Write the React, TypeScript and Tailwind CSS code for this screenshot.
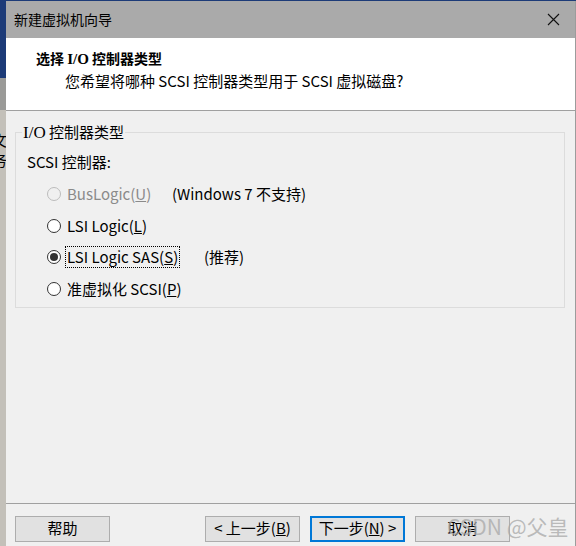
import type { ReactNode } from 'react';

const ui = { fontFamily: '"Noto Sans CJK SC", "Noto Sans", sans-serif' };
const serif = { fontFamily: '"Liberation Serif", "Noto Sans CJK SC", serif' };

function Radio({ checked, disabled }: { checked?: boolean; disabled?: boolean }) {
  return (
    <span
      className={`w-[14px] h-[14px] rounded-full border flex items-center justify-center shrink-0 ${
        disabled ? 'border-[#bcbcbc] bg-[#f0f0f0]' : 'border-[#333] bg-white'
      }`}
    >
      {checked && <span className="w-[8px] h-[8px] rounded-full bg-[#333]" />}
    </span>
  );
}

function Option({
  label,
  hint,
  hintX,
  checked,
  disabled,
  focused,
}: {
  label: ReactNode;
  hint?: string;
  hintX?: string;
  checked?: boolean;
  disabled?: boolean;
  focused?: boolean;
}) {
  return (
    <div className="h-[31.7px] flex items-center pl-[31px]">
      <Radio checked={checked} disabled={disabled} />
      <span
        className={`ml-[5px] px-[1px] leading-[20px] ${disabled ? 'text-[#8a8a8a]' : 'text-black'} ${
          focused ? 'outline outline-1 outline-dotted outline-black' : 'outline-none'
        }`}
      >
        {label}
      </span>
      {hint && <span className={`absolute ${hintX} text-black`}>{hint}</span>}
    </div>
  );
}

function Button({ children, primary }: { children: ReactNode; primary?: boolean }) {
  return (
    <div
      className={`w-[95px] h-[26px] flex items-center justify-center bg-[#e1e1e1] text-[15px] text-black ${
        primary ? 'border-2 border-[#0078d7]' : 'border border-[#adadad]'
      }`}
    >
      {children}
    </div>
  );
}

export default function App() {
  return (
    <div className="w-[576px] h-[546px] overflow-hidden relative bg-[#f0f0f0] text-[15px]" style={ui}>
      <div className="h-[1px] bg-[#1d3b78]" />
      <div className="flex h-[545px]">
        {/* desktop behind the dialog */}
        <div className="w-[6px] flex flex-col shrink-0">
          <div className="h-[77px] bg-[#1d3b78]" />
          <div className="h-[32px] bg-[#9a9a98]" />
          <div className="flex-1 bg-[#c3c0b9] flex flex-col items-start overflow-hidden">
            <span className="mt-[20px] -ml-[8px] text-[15px] leading-[20px] text-black">文</span>
            <span className="-ml-[8px] text-[15px] leading-[20px] text-black">务</span>
          </div>
        </div>

        <div className="flex-1 flex flex-col">
          {/* title bar */}
          <div className="h-[37px] bg-[#aaaaaa] flex items-center justify-between pl-[8px] pr-[15px]">
            <span className="text-[14px] text-black">新建虚拟机向导</span>
            <svg width="13" height="13" viewBox="0 0 13 13">
              <path d="M1 1 L12 12 M12 1 L1 12" stroke="#111" strokeWidth="1.1" />
            </svg>
          </div>

          {/* header */}
          <div className="h-[72px] bg-white flex flex-col">
            <div className="pl-[30px] pt-[10px] leading-[20px] text-[14px] font-bold text-black">
              选择 <span style={serif} className="text-[15px]">I/O</span> 控制器类型
            </div>
            <div className="pl-[59px] pt-[2px] leading-[20px] text-black">
              您希望将哪种 SCSI 控制器类型用于 SCSI 虚拟磁盘?
            </div>
          </div>
          <div className="h-[1px] bg-[#a0a0a0]" />

          {/* body */}
          <div className="flex-1 flex flex-col">
            <fieldset className="ml-[9px] mr-[10px] mt-[11px] h-[186px] border border-[#dcdcdc] relative">
              <legend className="ml-[6px] px-[1px] leading-[20px] text-black">
                <span style={serif} className="text-[17px]">I/O</span> 控制器类型
              </legend>
              <div className="pl-[11px] pt-[9px] leading-[20px] text-black">SCSI 控制器:</div>
              <div className="pt-[6px]">
                <Option
                  label={<>BusLogic(<u>U</u>)</>}
                  hint="(Windows 7 不支持)"
                  hintX="left-[156px]"
                  disabled
                />
                <Option label={<>LSI Logic(<u>L</u>)</>} />
                <Option
                  label={<>LSI Logic SAS(<u>S</u>)</>}
                  hint="(推荐)"
                  hintX="left-[188px]"
                  checked
                  focused
                />
                <Option label={<>准虚拟化 SCSI(<u>P</u>)</>} />
              </div>
            </fieldset>

            <div className="flex-1" />
            <div className="h-[1px] bg-[#a0a0a0]" />
            <div className="flex items-center pl-[9px] pt-[11px] pb-[4px] h-[42px]">
              <Button>帮助</Button>
              <div className="ml-[95px] flex gap-[10px]">
                <Button>&lt; 上一步(<u>B</u>)</Button>
                <Button primary>下一步(<u>N</u>) &gt;</Button>
                <Button>取消</Button>
              </div>
            </div>
          </div>
        </div>
        <div className="w-[1px] bg-[#9c9c9c]" />
      </div>

      {/* watermark */}
      <div className="absolute left-[447px] top-[511px] text-[21px] leading-[30px] text-[#a8a8a8]/75">
        CSDN @父皇
      </div>
    </div>
  );
}
